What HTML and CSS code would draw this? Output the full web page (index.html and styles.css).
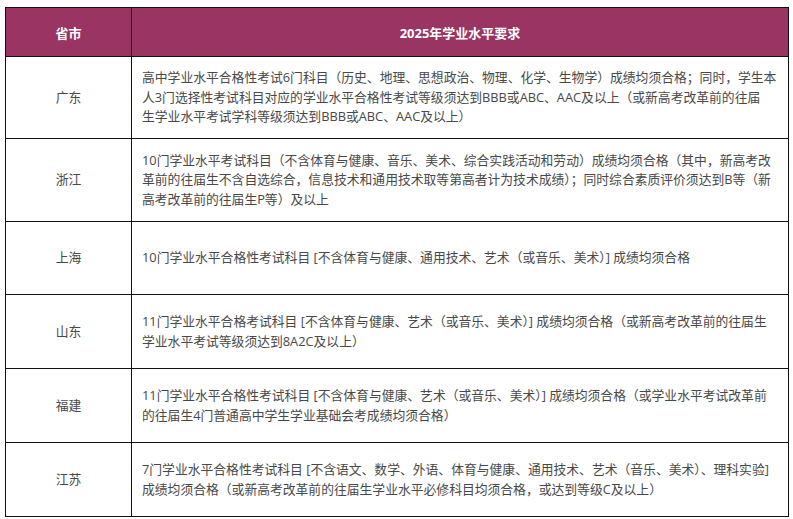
FILE: index.html
```html
<!DOCTYPE html>
<html lang="zh-CN">
<head>
<meta charset="utf-8">
<title>2025年学业水平要求</title>
<link rel="stylesheet" href="styles.css">
</head>
<body>
<table class="req-table">
  <colgroup>
    <col class="col-prov">
    <col class="col-req">
  </colgroup>
  <thead>
    <tr class="head-row">
      <th>省市</th>
      <th>2025年学业水平要求</th>
    </tr>
  </thead>
  <tbody>
    <tr class="row-h82">
      <td class="prov">广东</td>
      <td class="req">高中学业水平合格性考试6门科目（历史、地理、思想政治、物理、化学、生物学）成绩均须合格；同时，学生本<br>人3门选择性考试科目对应的学业水平合格性考试等级须达到BBB或ABC、AAC及以上（或新高考改革前的往届<br>生学业水平考试学科等级须达到BBB或ABC、AAC及以上）</td>
    </tr>
    <tr class="row-h83">
      <td class="prov">浙江</td>
      <td class="req">10门学业水平考试科目（不含体育与健康、音乐、美术、综合实践活动和劳动）成绩均须合格（其中，新高考改<br>革前的往届生不含自选综合，信息技术和通用技术取等第高者计为技术成绩）；同时综合素质评价须达到B等（新<br>高考改革前的往届生P等）及以上</td>
    </tr>
    <tr class="row-h73">
      <td class="prov">上海</td>
      <td class="req">10门学业水平合格性考试科目 [不含体育与健康、通用技术、艺术（或音乐、美术）] 成绩均须合格</td>
    </tr>
    <tr class="row-h74">
      <td class="prov">山东</td>
      <td class="req">11门学业水平合格考试科目 [不含体育与健康、艺术（或音乐、美术）] 成绩均须合格（或新高考改革前的往届生<br>学业水平考试等级须达到8A2C及以上）</td>
    </tr>
    <tr class="row-h74">
      <td class="prov">福建</td>
      <td class="req">11门学业水平合格性考试科目 [不含体育与健康、艺术（或音乐、美术）] 成绩均须合格（或学业水平考试改革前<br>的往届生4门普通高中学生学业基础会考成绩均须合格）</td>
    </tr>
    <tr class="row-h74">
      <td class="prov">江苏</td>
      <td class="req">7门学业水平合格性考试科目 [不含语文、数学、外语、体育与健康、通用技术、艺术（音乐、美术）、理科实验]<br>成绩均须合格（或新高考改革前的往届生学业水平必修科目均须合格，或达到等级C及以上）</td>
    </tr>
  </tbody>
</table>
</body>
</html>
```

FILE: styles.css
```css
html, body {
  margin: 0;
  padding: 0;
  background: #ffffff;
}

body {
  padding: 7px 0 0 5px;
  font-family: "Open Sans", "Noto Sans CJK SC", sans-serif;
  font-size: 12.8px;
  color: #484848;
}

.req-table {
  border-collapse: collapse;
  width: 784px;
  table-layout: fixed;
}

.col-prov {
  width: 126px;
}

.req-table th,
.req-table td {
  border: 1px solid #111111;
  vertical-align: middle;
}

.head-row {
  height: 49px;
  background: #993463;
}

.head-row th {
  color: #ffffff;
  font-weight: 700;
  font-size: 13px;
  text-align: center;
  padding: 0;
}

.row-h82 { height: 82px; }
.row-h83 { height: 83px; }
.row-h73 { height: 73px; }
.row-h74 { height: 74px; }

.prov {
  text-align: center;
  padding: 0;
  line-height: 19.5px;
}

.req {
  text-align: left;
  padding: 0 0 0 10px;
  line-height: 19.5px;
  white-space: nowrap;
  overflow: hidden;
}
```
